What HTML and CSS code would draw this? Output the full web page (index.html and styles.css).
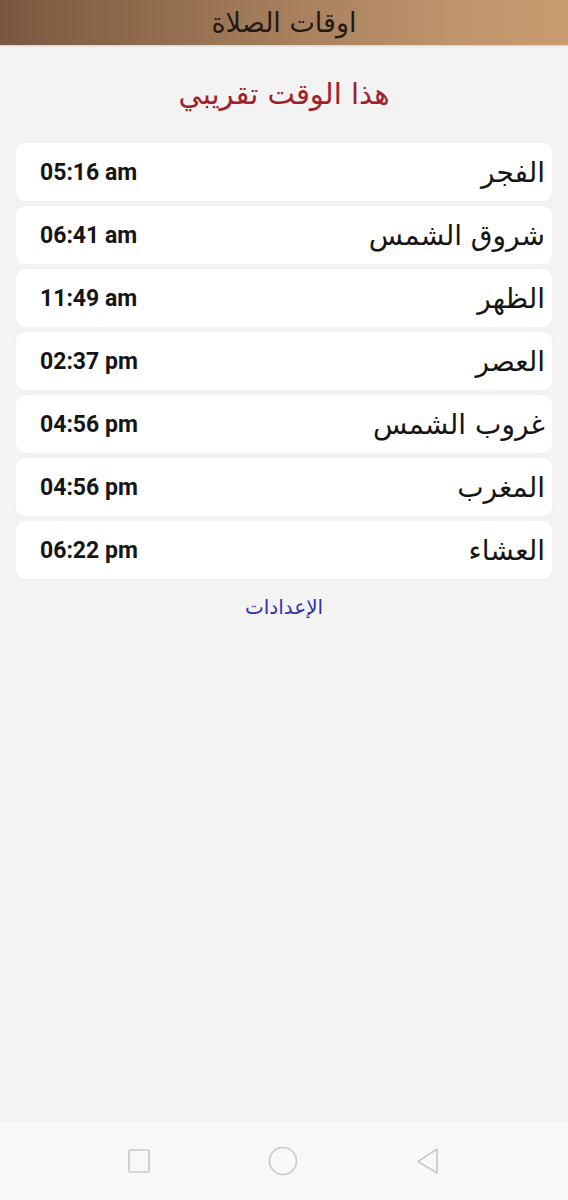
FILE: index.html
```html
<!DOCTYPE html>
<html lang="ar" dir="rtl">
<head>
<meta charset="utf-8">
<link rel="stylesheet" href="styles.css">
</head>
<body>
<div class="screen">
  <header class="topbar">اوقات الصلاة</header>
  <main class="content">
    <h2 class="note">هذا الوقت تقريبي</h2>
    <ul class="times">
      <li class="row"><span class="name">الفجر</span><span class="time">05:16 am</span></li>
      <li class="row"><span class="name">شروق الشمس</span><span class="time">06:41 am</span></li>
      <li class="row"><span class="name">الظهر</span><span class="time">11:49 am</span></li>
      <li class="row"><span class="name">العصر</span><span class="time">02:37 pm</span></li>
      <li class="row"><span class="name">غروب الشمس</span><span class="time">04:56 pm</span></li>
      <li class="row"><span class="name">المغرب</span><span class="time">04:56 pm</span></li>
      <li class="row"><span class="name">العشاء</span><span class="time">06:22 pm</span></li>
    </ul>
    <a class="settings" href="#">الإعدادات</a>
  </main>
  <nav class="navbar" dir="ltr">
    <svg class="nav-icon" width="26" height="26" viewBox="0 0 26 26"><rect x="3" y="2" width="20" height="22" rx="1" fill="none" stroke="#c9c9c9" stroke-width="1.6"/></svg>
    <svg class="nav-icon" width="32" height="32" viewBox="0 0 32 32"><circle cx="16" cy="16" r="13.5" fill="none" stroke="#c9c9c9" stroke-width="1.6"/></svg>
    <svg class="nav-icon" width="28" height="30" viewBox="0 0 28 30"><path d="M23 3 L23 27 L4 15.5 Z" fill="none" stroke="#c9c9c9" stroke-width="1.6" stroke-linejoin="round"/></svg>
  </nav>
</div>
</body>
</html>
```
FILE: styles.css
```css
html, body {
  margin: 0;
  padding: 0;
}
body {
  background: #f3f3f3;
  font-family: "DejaVu Sans", "Noto Sans", sans-serif;
}
.screen {
  width: 568px;
  height: 1200px;
  display: flex;
  flex-direction: column;
  background: #f3f3f3;
}
.topbar {
  height: 45px;
  flex: none;
  display: flex;
  align-items: center;
  justify-content: center;
  background: linear-gradient(to right, #7a5840 0%, #8f6b4c 25%, #aa8260 55%, #be946c 80%, #c99b70 100%);
  color: #231a12;
  font-size: 27px;
  box-shadow: 0 1px 2px rgba(0,0,0,0.15);
  position: relative;
  z-index: 1;
}
.content {
  flex: 1;
  display: flex;
  flex-direction: column;
  align-items: stretch;
  padding: 0 16px;
}
.note {
  margin: 27px 0 0;
  height: 45px;
  text-align: center;
  color: #a3202a;
  font-size: 29px;
  font-weight: normal;
  line-height: 45px;
}
.times {
  list-style: none;
  margin: 26px 0 0;
  padding: 0;
  display: flex;
  flex-direction: column;
  gap: 5px;
}
.row {
  height: 58px;
  background: #ffffff;
  border-radius: 9px;
  display: flex;
  align-items: center;
  justify-content: space-between;
  padding: 0 7px 0 24px;
  box-shadow: 0 0 3px rgba(0,0,0,0.03);
}
.name {
  font-size: 28px;
  color: #151515;
}
.time {
  font-family: Roboto, "Liberation Sans", sans-serif;
  font-weight: bold;
  font-size: 23px;
  color: #151515;
  direction: ltr;
}
.settings {
  margin-top: 16px;
  align-self: center;
  color: #3532a8;
  font-size: 20px;
  text-decoration: none;
}
.navbar {
  height: 78px;
  flex: none;
  background: #f8f8f8;
  display: flex;
  align-items: center;
  justify-content: center;
  gap: 115px;
}
.nav-icon {
  display: block;
}
```
